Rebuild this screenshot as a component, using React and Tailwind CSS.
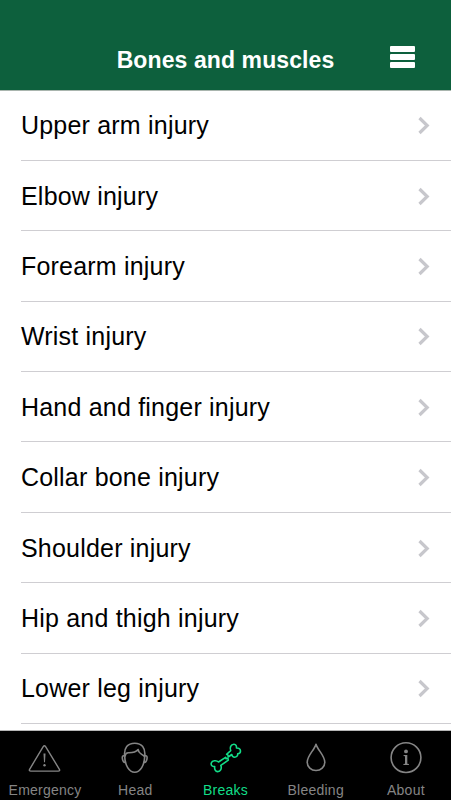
const injuries = [
  "Upper arm injury",
  "Elbow injury",
  "Forearm injury",
  "Wrist injury",
  "Hand and finger injury",
  "Collar bone injury",
  "Shoulder injury",
  "Hip and thigh injury",
  "Lower leg injury",
]

const iconProps = {
  width: 36,
  height: 36,
  viewBox: "0 0 36 36",
  fill: "none",
  stroke: "currentColor",
  strokeWidth: 1.6,
  strokeLinecap: "round",
  strokeLinejoin: "round",
}

const EmergencyIcon = () => (
  <svg {...iconProps} strokeWidth={1.4}>
    <path d="M16.2 7.600q1.200-1.800 2.400 0L32.400 30.300q.8 1.800-1.200 1.800H3.800q-2 0-1.200-1.800z" />
    <path d="M16.500 14.600h2l-.5 8.600h-1z" fill="currentColor" stroke="none" />
    <circle cx="17.500" cy="26.200" r="1.200" fill="currentColor" stroke="none" />
  </svg>
)

const HeadIcon = () => (
  <svg {...iconProps}>
    <path d="M7.700 17.600C6.600 8.800 10.800 4.200 17.700 4.200S28.800 8.800 27.700 17.600C27.400 26 23.400 33.200 17.700 33.200S8 26 7.700 17.600z" />
    <path d="M7.600 16.800c-2.400-.6-2.600 1.400-2.100 3.600.5 2.300 1.300 3.200 2.700 3M27.800 16.800c2.400-.6 2.600 1.400 2.100 3.600-.5 2.300-1.300 3.200-2.700 3" />
    <path d="M8 17c.4-2 1.400-3.200 3.200-3.300 4 0 7.200.2 9.900-3.200.1 3.400 3 4 6.300 6.800" />
  </svg>
)

const BonesIcon = () => (
  <svg {...iconProps}>
    <path d="M18.600 15.300l4.100-3.600c-1.200-2.600 0-6.600 3.300-6.500 1.900.1 2.700 1.900 2.500 3.800 2-.2 4 1 4 3 0 1.700-1.200 2.700-2.800 2.900.2 2-1.300 3.300-3 3.300-1.800 0-2.700-1.200-2.900-2.700l-3.600 2.500-.2-1.900z" />
    <path d="M17.600 18.300l-7.100 4.700c-2-2-6.400-1.600-7.200.9-.6 2.400 1 3.800 3.400 3.700-.4 2.600.8 4.900 2.900 5 3 .1 4.400-3.400 3.200-6.200l7.500-5.200-.4-2-1.800.5z" />
  </svg>
)

const BleedingIcon = () => (
  <svg {...iconProps}>
    <path d="M18 5.200C16.600 10.800 9.200 16.400 9.200 23.200a8.800 8.300 0 0 0 17.600 0C26.800 16.400 19.400 10.800 18 5.200z" />
  </svg>
)

const AboutIcon = () => (
  <svg {...iconProps}>
    <circle cx="18" cy="18.600" r="14.900" />
    <circle cx="18" cy="12.400" r="1.900" fill="currentColor" stroke="none" />
    <path d="M15.600 16h3.700v8.700l1.600.4v.9h-5.500v-.9l1.600-.4v-7.400l-1.400-.4z" fill="currentColor" stroke="none" />
  </svg>
)

const tabs = [
  { name: "Emergency", icon: EmergencyIcon },
  { name: "Head", icon: HeadIcon },
  { name: "Breaks", icon: BonesIcon, active: true },
  { name: "Bleeding", icon: BleedingIcon },
  { name: "About", icon: AboutIcon },
]

const Row = ({ label }) => (
  <li className="h-[70.4px] pl-[21px]">
    <button className="flex h-full w-full items-center justify-between border-b border-[#cfced2] pr-[20px] text-left">
      <span className="text-[25px] leading-[30px] tracking-[0.2px] text-black">{label}</span>
      <svg width="14" height="20" viewBox="0 0 14 20" fill="none" stroke="#c7c7cc" strokeWidth="3.2">
        <path d="M2.500 3L10.200 10.500l-7.700 7.500" />
      </svg>
    </button>
  </li>
)

const App = () => {
  return (
    <div className="flex h-screen flex-col overflow-hidden bg-white font-['Liberation_Sans',Arial,sans-serif]">
      <header className="grid h-[91px] shrink-0 grid-cols-[1fr_auto_1fr] items-center border-b border-[#a9b5ae] bg-[#0d603d] pt-[30px]">
        <span />
        <h1 className="text-[23px] font-bold leading-7 tracking-[0.1px] text-white">Bones and muscles</h1>
        <button className="mb-1.5 mr-9 flex flex-col gap-0.5 justify-self-end" aria-label="Menu">
          <span className="h-1.5 w-[25px] rounded-[1px] bg-white" />
          <span className="h-1.5 w-[25px] rounded-[1px] bg-white" />
          <span className="h-1.5 w-[25px] rounded-[1px] bg-white" />
        </button>
      </header>

      <ul className="-mt-[0.5px] min-h-0 flex-1 overflow-hidden">
        {injuries.map((injury) => (
          <Row key={injury} label={injury} />
        ))}
      </ul>

      <nav className="flex h-[70px] shrink-0 border-t border-[#b5b5b5] bg-black">
        {tabs.map(({ name, icon: Icon, active }) => (
          <button
            key={name}
            className={`flex flex-1 basis-0 flex-col items-center pt-2 ${active ? "text-[#12dd88]" : "text-[#858585]"}`}
          >
            <Icon />
            <span className="mt-[7px] text-[14px] leading-4 tracking-[0.25px]">{name}</span>
          </button>
        ))}
      </nav>
    </div>
  )
}

export default App
